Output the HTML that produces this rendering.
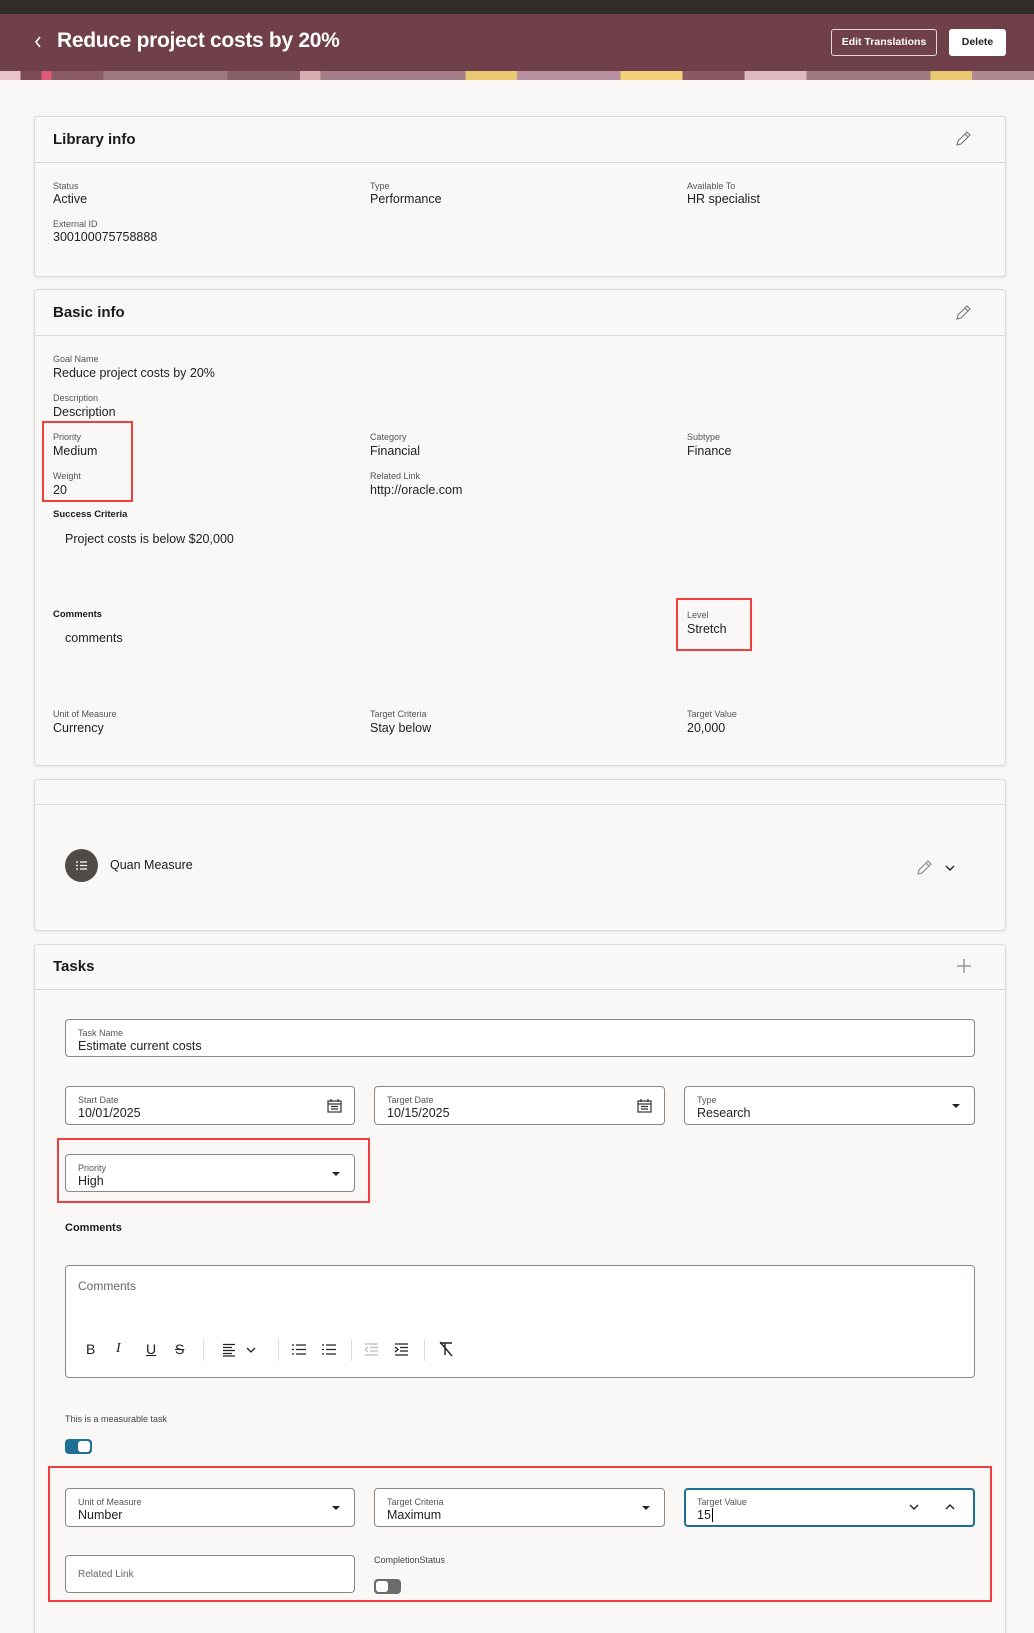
<!DOCTYPE html>
<html style="height:1633px;overflow:hidden"><head><meta charset="utf-8"><style>
*{margin:0;padding:0;box-sizing:border-box}
body{width:1034px;height:1633px;background:#f9f8f6;font-family:"Liberation Sans",sans-serif;color:#1d1b19;position:relative;overflow:hidden}
.a{position:absolute;white-space:nowrap}
.lbl{font-size:9px;color:#555;line-height:11px}
.val{font-size:12.5px;color:#222;line-height:15px}
.card{position:absolute;left:34px;width:972px;background:#f9f8f6;border:1px solid #dcdad6;border-radius:4px;box-shadow:0 1px 3px rgba(0,0,0,.08)}
.ct{font-size:15px;font-weight:bold;line-height:18px}
.hr{position:absolute;left:34px;width:972px;height:1px;background:#dcdad6}
.fld{position:absolute;background:#fff;border:1px solid #8b8784;border-radius:4px;height:39px}
.fld .l{position:absolute;left:12px;top:8px;font-size:9px;color:#555}
.fld .v{position:absolute;left:12px;top:19px;font-size:12.5px;color:#222}
.caret{position:absolute;right:14px;top:17px;width:0;height:0;border-left:4px solid transparent;border-right:4px solid transparent;border-top:4px solid #222}
.red{position:absolute;border:2px solid #ef4040}
.bold{font-size:11px;font-weight:bold}
</style></head><body>
<div class="a" style="left:0;top:0;width:1034px;height:14px;background:#312d2a"></div>
<div class="a" style="left:0;top:14px;width:1034px;height:57px;background:#6f3f4a"></div>
<div class="a" style="left:0;top:71px;width:1034px;height:9px;background:linear-gradient(90deg,#e9c3c9 0 2%,#7a4a55 2% 4%,#e05878 4% 5%,#8a5a66 5% 10%,#a07880 10% 22%,#8a6068 22% 29%,#d8aab2 29% 31%,#a27c86 31% 45%,#e8c870 45% 50%,#b890a0 50% 60%,#f0d078 60% 66%,#8a5864 66% 72%,#e0b8c0 72% 78%,#a07880 78% 90%,#e8c870 90% 94%,#b08890 94% 100%)"></div>
<svg class="a" style="left:33px;top:35px" width="10" height="14"><path d="M7 2 L3 7 L7 12" fill="none" stroke="#fff" stroke-width="1.6"/></svg>
<div class="a" style="left:57px;top:28px;font-size:21px;font-weight:bold;color:#fff;line-height:26px;letter-spacing:-.3px">Reduce project costs by 20%</div>
<div class="a" style="left:831px;top:29px;width:106px;height:27px;border:1px solid #e6d9dc;border-radius:3px;color:#fff;font-size:10.5px;font-weight:bold;text-align:center;line-height:25px">Edit Translations</div>
<div class="a" style="left:949px;top:29px;width:57px;height:27px;background:#fff;border-radius:3px;color:#222;font-size:10.5px;font-weight:bold;text-align:center;line-height:27px">Delete</div>

<div class="card" style="top:116px;height:161px"></div>
<div class="hr" style="top:162px"></div>
<div class="a ct" style="left:53px;top:131px">Library info</div>
<svg class="a" style="left:955px;top:131px" width="16" height="16"><path d="M2 14 L3 10 L12 1 L15 4 L6 13 Z M10 3 L13 6" fill="none" stroke="#777" stroke-width="1.1"/></svg>
<div class="a lbl" style="left:53px;top:181px">Status</div><div class="a val" style="left:53px;top:192px">Active</div>
<div class="a lbl" style="left:370px;top:181px">Type</div><div class="a val" style="left:370px;top:192px">Performance</div>
<div class="a lbl" style="left:687px;top:181px">Available To</div><div class="a val" style="left:687px;top:192px">HR specialist</div>
<div class="a lbl" style="left:53px;top:219px">External ID</div><div class="a val" style="left:53px;top:230px">300100075758888</div>

<div class="card" style="top:289px;height:477px"></div>
<div class="hr" style="top:335px"></div>
<div class="a ct" style="left:53px;top:304px">Basic info</div>
<svg class="a" style="left:955px;top:305px" width="16" height="16"><path d="M2 14 L3 10 L12 1 L15 4 L6 13 Z M10 3 L13 6" fill="none" stroke="#777" stroke-width="1.1"/></svg>
<div class="a lbl" style="left:53px;top:354px">Goal Name</div><div class="a val" style="left:53px;top:366px">Reduce project costs by 20%</div>
<div class="a lbl" style="left:53px;top:393px">Description</div><div class="a val" style="left:53px;top:405px">Description</div>
<div class="a lbl" style="left:53px;top:432px">Priority</div><div class="a val" style="left:53px;top:444px">Medium</div>
<div class="a lbl" style="left:370px;top:432px">Category</div><div class="a val" style="left:370px;top:444px">Financial</div>
<div class="a lbl" style="left:687px;top:432px">Subtype</div><div class="a val" style="left:687px;top:444px">Finance</div>
<div class="a lbl" style="left:53px;top:471px">Weight</div><div class="a val" style="left:53px;top:483px">20</div>
<div class="a lbl" style="left:370px;top:471px">Related Link</div><div class="a val" style="left:370px;top:483px">http://oracle.com</div>
<div class="red" style="left:42px;top:421px;width:91px;height:81px"></div>
<div class="a bold" style="left:53px;top:509px;font-size:9.5px">Success Criteria</div>
<div class="a val" style="left:65px;top:532px">Project costs is below $20,000</div>
<div class="a bold" style="left:53px;top:609px;font-size:9.5px">Comments</div>
<div class="a val" style="left:65px;top:631px">comments</div>
<div class="a lbl" style="left:687px;top:610px">Level</div><div class="a val" style="left:687px;top:622px">Stretch</div>
<div class="red" style="left:676px;top:598px;width:76px;height:53px"></div>
<div class="a lbl" style="left:53px;top:709px">Unit of Measure</div><div class="a val" style="left:53px;top:721px">Currency</div>
<div class="a lbl" style="left:370px;top:709px">Target Criteria</div><div class="a val" style="left:370px;top:721px">Stay below</div>
<div class="a lbl" style="left:687px;top:709px">Target Value</div><div class="a val" style="left:687px;top:721px">20,000</div>

<div class="card" style="top:779px;height:152px"></div>
<div class="hr" style="top:804px"></div>
<div class="a" style="left:65px;top:849px;width:33px;height:33px;border-radius:50%;background:#4f4b48"></div>
<svg class="a" style="left:75px;top:859px" width="13" height="13"><path d="M5 3 H12 M5 6.5 H12 M5 10 H12 M1 3 H3 M1 6.5 H3 M1 10 H3" stroke="#fff" stroke-width="1.2"/></svg>
<div class="a" style="left:110px;top:858px;font-size:12.5px;line-height:15px">Quan Measure</div>
<svg class="a" style="left:916px;top:860px" width="16" height="16"><path d="M2 14 L3 10 L12 1 L15 4 L6 13 Z M10 3 L13 6" fill="none" stroke="#888" stroke-width="1.1"/></svg>
<svg class="a" style="left:945px;top:864px" width="10" height="8"><path d="M1 2 L5 6 L9 2" fill="none" stroke="#222" stroke-width="1.4"/></svg>

<div class="card" style="top:944px;height:760px"></div>
<div class="hr" style="top:989px"></div>
<div class="a ct" style="left:53px;top:958px">Tasks</div>
<svg class="a" style="left:956px;top:958px" width="16" height="16"><path d="M8 1 V15 M1 8 H15" stroke="#888" stroke-width="1.2"/></svg>
<div class="fld" style="left:65px;top:1019px;width:910px;height:38px"><div class="l">Task Name</div><div class="v">Estimate current costs</div></div>
<div class="fld" style="left:65px;top:1086px;width:290px"><div class="l">Start Date</div><div class="v">10/01/2025</div>
<svg style="position:absolute;right:12px;top:11px" width="15" height="15"><rect x="1" y="3" width="13" height="11" fill="none" stroke="#333" stroke-width="1.2"/><path d="M1 6 H14 M4 1 V4 M11 1 V4 M4 8.5 H11 M4 11 H11" stroke="#333" stroke-width="1.2"/></svg></div>
<div class="fld" style="left:374px;top:1086px;width:291px"><div class="l">Target Date</div><div class="v">10/15/2025</div>
<svg style="position:absolute;right:12px;top:11px" width="15" height="15"><rect x="1" y="3" width="13" height="11" fill="none" stroke="#333" stroke-width="1.2"/><path d="M1 6 H14 M4 1 V4 M11 1 V4 M4 8.5 H11 M4 11 H11" stroke="#333" stroke-width="1.2"/></svg></div>
<div class="fld" style="left:684px;top:1086px;width:291px"><div class="l">Type</div><div class="v">Research</div><div class="caret"></div></div>
<div class="fld" style="left:65px;top:1154px;width:290px;height:38px"><div class="l">Priority</div><div class="v">High</div><div class="caret"></div></div>
<div class="red" style="left:57px;top:1138px;width:313px;height:65px"></div>
<div class="a bold" style="left:65px;top:1222px">Comments</div>
<div class="a" style="left:65px;top:1265px;width:910px;height:113px;background:#fff;border:1px solid #8b8784;border-radius:4px"></div>
<div class="a" style="left:78px;top:1279px;font-size:12px;color:#666">Comments</div>
<div class="a" style="left:86px;top:1340px;font-size:14px;line-height:18px;color:#222">B</div>
<div class="a" style="left:116px;top:1340px;font-size:14px;line-height:18px;font-style:italic;font-family:'Liberation Serif',serif">I</div>
<div class="a" style="left:146px;top:1340px;font-size:14px;line-height:18px;text-decoration:underline">U</div>
<div class="a" style="left:175px;top:1340px;font-size:14px;line-height:18px;text-decoration:line-through">S</div>
<div class="a" style="left:203px;top:1339px;width:1px;height:22px;background:#ddd"></div>
<svg class="a" style="left:223px;top:1343px" width="40" height="14"><path d="M0 1.5H12M0 4.5H9M0 7.5H12M0 10.5H9M0 13H12" stroke="#222" stroke-width="1.3"/><path d="M24 5 L28 9 L32 5" fill="none" stroke="#222" stroke-width="1.3"/></svg>
<div class="a" style="left:278px;top:1339px;width:1px;height:22px;background:#ddd"></div>
<svg class="a" style="left:292px;top:1343px" width="50" height="13"><path d="M0 2H2M0 6.5H2M0 11H2M4 2H14M4 6.5H14M4 11H14M30 2H32M30 6.5H32M30 11H32M34 2H44M34 6.5H44M34 11H44" stroke="#222" stroke-width="1.3"/></svg>
<div class="a" style="left:351px;top:1339px;width:1px;height:22px;background:#ddd"></div>
<svg class="a" style="left:365px;top:1343px" width="50" height="13"><path d="M0 1H13M5 4.5H13M5 8H13M0 12H13M3 4 L0 6.5 L3 9" fill="none" stroke="#bbb" stroke-width="1.3"/><path d="M30 1H43M35 4.5H43M35 8H43M30 12H43M30 4 L33 6.5 L30 9" fill="none" stroke="#222" stroke-width="1.3"/></svg>
<div class="a" style="left:424px;top:1339px;width:1px;height:22px;background:#ddd"></div>
<svg class="a" style="left:438px;top:1341px" width="16" height="16"><path d="M2 2H14M7 2V14M2 1 L14 15" fill="none" stroke="#222" stroke-width="1.4"/></svg>
<div class="a" style="left:65px;top:1414px;font-size:9px;color:#444">This is a measurable task</div>
<div class="a" style="left:65px;top:1439px;width:27px;height:15px;border-radius:4px;background:#1e6f93"></div>
<div class="a" style="left:78px;top:1441px;width:12px;height:11px;border-radius:3px;background:#fff"></div>
<div class="red" style="left:48px;top:1466px;width:944px;height:136px"></div>
<div class="fld" style="left:65px;top:1488px;width:290px"><div class="l">Unit of Measure</div><div class="v">Number</div><div class="caret"></div></div>
<div class="fld" style="left:374px;top:1488px;width:291px"><div class="l">Target Criteria</div><div class="v">Maximum</div><div class="caret"></div></div>
<div class="fld" style="left:684px;top:1488px;width:291px;border:2px solid #1e6f93"><div class="l" style="left:11px;top:7px">Target Value</div><div class="v" style="left:11px;top:18px">15<span style="border-left:1px solid #000;margin-left:1px"></span></div>
<svg style="position:absolute;right:54px;top:13px" width="10" height="8"><path d="M1 2 L5 6 L9 2" fill="none" stroke="#222" stroke-width="1.4"/></svg>
<svg style="position:absolute;right:18px;top:13px" width="10" height="8"><path d="M1 6 L5 2 L9 6" fill="none" stroke="#222" stroke-width="1.4"/></svg></div>
<div class="fld" style="left:65px;top:1555px;width:290px;height:38px"><div class="l" style="top:13px;font-size:10px;color:#666">Related Link</div></div>
<div class="a" style="left:374px;top:1555px;font-size:9px;color:#444">CompletionStatus</div>
<div class="a" style="left:374px;top:1579px;width:27px;height:15px;border-radius:4px;background:#6d6a67"></div>
<div class="a" style="left:376px;top:1581px;width:12px;height:11px;border-radius:3px;background:#fff"></div>
</body></html>
